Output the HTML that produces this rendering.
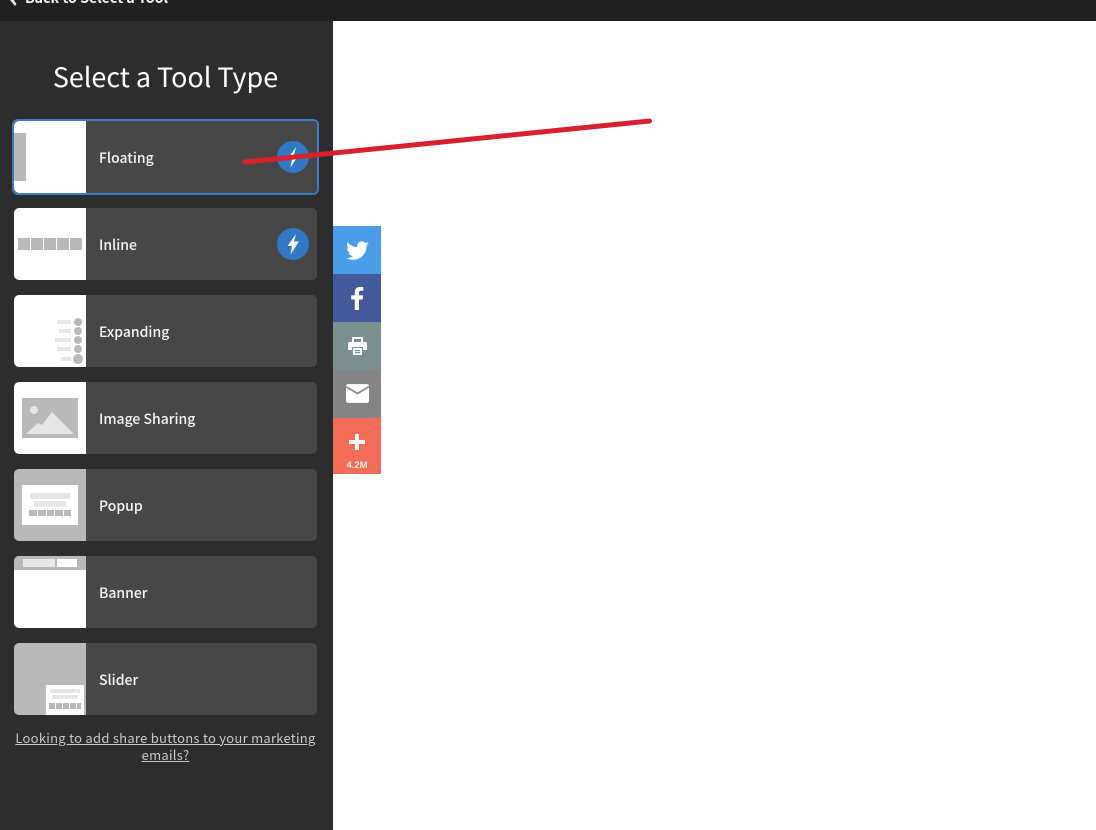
<!DOCTYPE html>
<html>
<head>
<meta charset="utf-8">
<style>
html,body{margin:0;padding:0;background:#fff;}
body{width:1096px;height:830px;position:relative;overflow:hidden;font-family:"Noto Sans CJK JP","Liberation Sans",sans-serif;}
.abs{position:absolute;}
#top{left:0;top:0;width:1096px;height:21px;background:#212121;overflow:hidden;}
#back{left:25px;top:-13px;font-size:14.2px;line-height:22px;font-weight:700;color:#f2f2f2;white-space:nowrap;}
#side{left:0;top:21px;width:333px;height:809px;background:#2d2d2d;}
h1{position:absolute;left:0;top:57px;width:331px;margin:0;text-align:center;font-size:26.900px;line-height:38px;font-weight:400;color:#fff;}
.card{position:absolute;left:14px;width:303px;height:72px;background:#474747;border-radius:5px;overflow:hidden;}
.sel{position:absolute;left:12px;top:119px;width:303px;height:72px;border:2px solid #3f7ac4;border-radius:6px;}
.th{position:absolute;left:0;top:0;width:72px;height:72px;background:#fff;overflow:hidden;}
.th.g{background:#b9b9b9;}
.th i{position:absolute;display:block;}
.lb{position:absolute;left:85px;top:24.500px;font-size:14px;line-height:24px;font-weight:500;color:#f5f5f5;white-space:nowrap;}
.bolt{position:absolute;left:263px;top:20px;width:32px;height:32px;}
#mail{left:0;top:729px;width:331px;text-align:center;font-size:13px;line-height:17px;letter-spacing:.27px;color:#c9c9c9;text-decoration:underline;white-space:nowrap;}
.sh{position:absolute;left:333px;width:48px;}
.sh svg{position:absolute;}
#cnt{position:absolute;left:0;top:42px;width:48px;text-align:center;font:700 9.5px/12px "Liberation Sans",sans-serif;color:#eee;}
</style>
</head>
<body>
<div class="abs" id="top"><svg class="abs" style="left:8px;top:0" width="10" height="8" viewBox="0 0 10 8"><path d="M9 -2 L2 0 L7 6 L8.500 4 L6 0.500Z" fill="#e8e8e8"/></svg><div class="abs" id="back">Back to Select a Tool</div></div>
<div class="abs" id="side"></div>
<h1>Select a Tool Type</h1>

<div class="card" style="top:121px"><div class="th"><i style="left:0;top:12px;width:12px;height:48px;background:#b9b9b9"></i></div><div class="lb">Floating</div>
<svg class="bolt" viewBox="0 0 32 32"><circle cx="16" cy="16" r="16" fill="#3178c6"/><path d="M19 6 L10.500 18 H15 L13.500 26.500 L22 13.500 H17 Z" fill="#fff"/></svg></div>
<div class="sel"></div>

<div class="card" style="top:208px"><div class="th"><i style="left:4px;top:30px;width:12px;height:12px;background:#b9b9b9"></i><i style="left:17px;top:30px;width:12px;height:12px;background:#b9b9b9"></i><i style="left:30px;top:30px;width:12px;height:12px;background:#b9b9b9"></i><i style="left:43px;top:30px;width:12px;height:12px;background:#b9b9b9"></i><i style="left:56px;top:30px;width:12px;height:12px;background:#b9b9b9"></i></div><div class="lb">Inline</div>
<svg class="bolt" viewBox="0 0 32 32"><circle cx="16" cy="16" r="16" fill="#3178c6"/><path d="M19 6 L10.500 18 H15 L13.500 26.500 L22 13.500 H17 Z" fill="#fff"/></svg></div>

<div class="card" style="top:295px"><div class="th">
<i style="left:43px;top:25px;width:14px;height:4px;background:#e6e6e6"></i>
<i style="left:45px;top:34px;width:12px;height:4px;background:#e6e6e6"></i>
<i style="left:41px;top:43px;width:16px;height:4px;background:#e6e6e6"></i>
<i style="left:43px;top:52px;width:14px;height:4px;background:#e6e6e6"></i>
<i style="left:47px;top:62px;width:10px;height:4px;background:#e6e6e6"></i>
<i style="left:60px;top:23px;width:8px;height:8px;border-radius:50%;background:#b9b9b9"></i>
<i style="left:60px;top:32px;width:8px;height:8px;border-radius:50%;background:#b9b9b9"></i>
<i style="left:60px;top:41px;width:8px;height:8px;border-radius:50%;background:#b9b9b9"></i>
<i style="left:60px;top:50px;width:8px;height:8px;border-radius:50%;background:#b9b9b9"></i>
<i style="left:59px;top:59px;width:10px;height:10px;border-radius:50%;background:#b9b9b9"></i>
</div><div class="lb">Expanding</div></div>

<div class="card" style="top:382px"><div class="th">
<svg style="position:absolute;left:8px;top:16px" width="56" height="40" viewBox="0 0 56 40"><rect width="56" height="40" fill="#b9b9b9"/><circle cx="12" cy="12" r="4" fill="#e6e6e6"/><path d="M4 36 L16 25 L20 27 L30 14 L52 36 Z" fill="#e6e6e6"/></svg>
</div><div class="lb">Image Sharing</div></div>

<div class="card" style="top:469px"><div class="th g">
<i style="left:8px;top:16px;width:56px;height:40px;background:#fff"></i>
<i style="left:16px;top:24px;width:40px;height:6px;background:#e6e6e6"></i>
<i style="left:20px;top:32px;width:32px;height:6px;background:#e6e6e6"></i>
<i style="left:15px;top:41px;width:8px;height:6px;background:#b9b9b9"></i>
<i style="left:24px;top:41px;width:8px;height:6px;background:#b9b9b9"></i>
<i style="left:33px;top:41px;width:7px;height:6px;background:#b9b9b9"></i>
<i style="left:41px;top:41px;width:8px;height:6px;background:#b9b9b9"></i>
<i style="left:50px;top:41px;width:7px;height:6px;background:#b9b9b9"></i>
</div><div class="lb">Popup</div></div>

<div class="card" style="top:556px"><div class="th">
<i style="left:0;top:0;width:72px;height:14px;background:#b9b9b9"></i>
<i style="left:9px;top:3px;width:32px;height:8px;background:#e6e6e6"></i>
<i style="left:43px;top:3px;width:20px;height:8px;background:#fff"></i>
</div><div class="lb">Banner</div></div>

<div class="card" style="top:643px"><div class="th g">
<i style="left:32px;top:42px;width:38px;height:30px;background:#fff"></i>
<i style="left:36px;top:46px;width:30px;height:4px;background:#e6e6e6"></i>
<i style="left:38px;top:52px;width:26px;height:4px;background:#e6e6e6"></i>
<i style="left:35px;top:60px;width:6px;height:6px;background:#b9b9b9"></i>
<i style="left:42px;top:60px;width:6px;height:6px;background:#b9b9b9"></i>
<i style="left:49px;top:60px;width:6px;height:6px;background:#b9b9b9"></i>
<i style="left:56px;top:60px;width:6px;height:6px;background:#b9b9b9"></i>
<i style="left:63px;top:60px;width:4px;height:6px;background:#b9b9b9"></i>
</div><div class="lb">Slider</div></div>

<div class="abs" id="mail">Looking to add share buttons to your marketing<br>emails?</div>

<div class="sh" style="top:226px;height:48px;background:#4a9ee9"><svg style="left:13px;top:15px" width="23" height="20" viewBox="0 0 24 20"><path d="M24 2.400c-.9.400-1.800.700-2.800.800 1-.6 1.800-1.600 2.200-2.700-1 .6-2 1-3.100 1.200C19.300.7 18 0 16.600 0c-2.700 0-4.900 2.200-4.900 4.900 0 .4 0 .8.100 1.100C7.700 5.800 4.100 3.900 1.700.9c-.4.700-.7 1.600-.7 2.500 0 1.700.9 3.200 2.200 4.100-.8 0-1.600-.2-2.200-.6v.1c0 2.400 1.700 4.400 3.900 4.800-.4.100-.8.200-1.300.2-.3 0-.6 0-.9-.1.600 2 2.400 3.400 4.600 3.400-1.700 1.300-3.800 2.100-6.100 2.100-.4 0-.8 0-1.200-.1C2.200 18.300 4.800 19.100 7.500 19.100c9.100 0 14-7.500 14-14v-.6c1-.7 1.800-1.500 2.500-2.100z" fill="#fff"/></svg></div>
<div class="sh" style="top:274px;height:48px;background:#44599b"><svg style="left:17px;top:12px" width="14" height="24" viewBox="0 0 14 24"><path d="M9 24V13.500h3.600l.6-4.100H9V6.800c0-1.200.4-2 2.100-2h2.200V1.100C12.900 1 11.600.9 10.200.9 7 .9 4.800 2.800 4.800 6.400v3H1.200v4.100h3.600V24z" fill="#fff"/></svg></div>
<div class="sh" style="top:322px;height:48px;background:#7c8f90"><svg style="left:15px;top:15px" width="19" height="18" viewBox="0 0 19 18"><path d="M4 0h11v5h-2V2H6v3H4z M2 5h15a2 2 0 0 1 2 2v6h-4v-3H4v3H0V7a2 2 0 0 1 2-2z M5 11h9v7H5z" fill="#fff"/><rect x="7" y="13" width="5" height="1.200" fill="#7c8f90"/><rect x="7" y="15" width="5" height="1.200" fill="#7c8f90"/></svg></div>
<div class="sh" style="top:370px;height:48px;background:#848484"><svg style="left:12.500px;top:14px" width="23" height="19" viewBox="0 0 22 18"><rect width="22" height="18" rx="2" fill="#fff"/><path d="M0 2.500 L11 9 L22 2.500" fill="none" stroke="#848484" stroke-width="1.600"/></svg></div>
<div class="sh" style="top:418px;height:56px;background:#f26c58"><svg style="left:16px;top:16px" width="16" height="16" viewBox="0 0 16 16"><path d="M6 0h4v6h6v4h-6v6H6v-6H0V6h6z" fill="#fff"/></svg><div id="cnt">4.2M</div></div>

<svg class="abs" style="left:0;top:0;pointer-events:none" width="1096" height="830"><path d="M245 162 L649.500 121" stroke="#d9202e" stroke-width="5" stroke-linecap="round" fill="none"/></svg>
</body>
</html>
